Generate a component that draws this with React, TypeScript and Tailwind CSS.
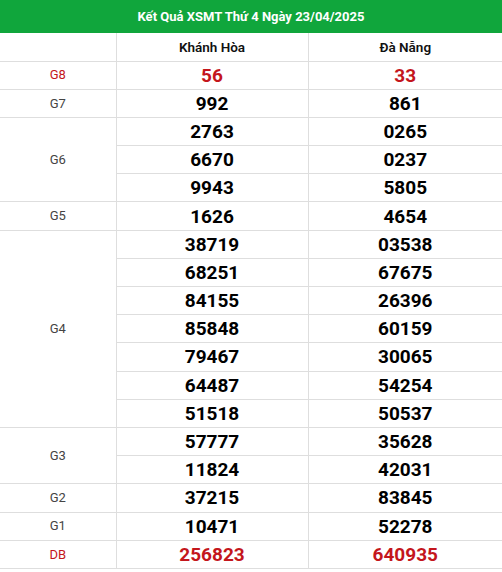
const rows: { label: string; kh: string[]; dn: string[]; red?: boolean }[] = [
  { label: 'G8', kh: ['56'], dn: ['33'], red: true },
  { label: 'G7', kh: ['992'], dn: ['861'] },
  { label: 'G6', kh: ['2763', '6670', '9943'], dn: ['0265', '0237', '5805'] },
  { label: 'G5', kh: ['1626'], dn: ['4654'] },
  {
    label: 'G4',
    kh: ['38719', '68251', '84155', '85848', '79467', '64487', '51518'],
    dn: ['03538', '67675', '26396', '60159', '30065', '54254', '50537'],
  },
  { label: 'G3', kh: ['57777', '11824'], dn: ['35628', '42031'] },
  { label: 'G2', kh: ['37215'], dn: ['83845'] },
  { label: 'G1', kh: ['10471'], dn: ['52278'] },
  { label: 'DB', kh: ['256823'], dn: ['640935'], red: true },
];

export default function App() {
  return (
    <div className="w-[502px] h-[572px] bg-white font-['Roboto',sans-serif]">
      <div className="h-[33px] bg-[#10a63c] flex items-center justify-center text-[13px] font-bold text-white">
        Kết Quả XSMT Thứ 4 Ngày 23/04/2025
      </div>
      <table className="w-[502px] border-collapse table-fixed">
        <colgroup>
          <col className="w-[116px]" />
          <col className="w-[192px]" />
          <col />
        </colgroup>
        <thead>
          <tr className="h-[28px]">
            <th className="border-r border-b border-[#dedede]"></th>
            <th className="border-r border-b border-[#dedede] text-[13.5px] font-semibold text-[#111]">Khánh Hòa</th>
            <th className="border-b border-[#dedede] text-[13.5px] font-semibold text-[#111]">Đà Nẵng</th>
          </tr>
        </thead>
        <tbody>
          {rows.map((r) =>
            r.kh.map((n, i) => (
              <tr key={r.label + i} className="h-[28.2px]">
                {i === 0 && (
                  <td
                    rowSpan={r.kh.length}
                    className={`border-r border-b border-[#dedede] text-center text-[13px] ${r.red ? 'text-[#c4161c]' : 'text-[#444]'}`}
                  >
                    {r.label}
                  </td>
                )}
                <td
                  className={`border-r border-b border-[#dedede] text-center text-[19px] font-bold leading-none ${r.red ? 'text-[#c4161c]' : 'text-black'}`}
                >
                  {n}
                </td>
                <td
                  className={`border-b border-[#dedede] text-center text-[19px] font-bold leading-none ${r.red ? 'text-[#c4161c]' : 'text-black'}`}
                >
                  {r.dn[i]}
                </td>
              </tr>
            ))
          )}
        </tbody>
      </table>
    </div>
  );
}
